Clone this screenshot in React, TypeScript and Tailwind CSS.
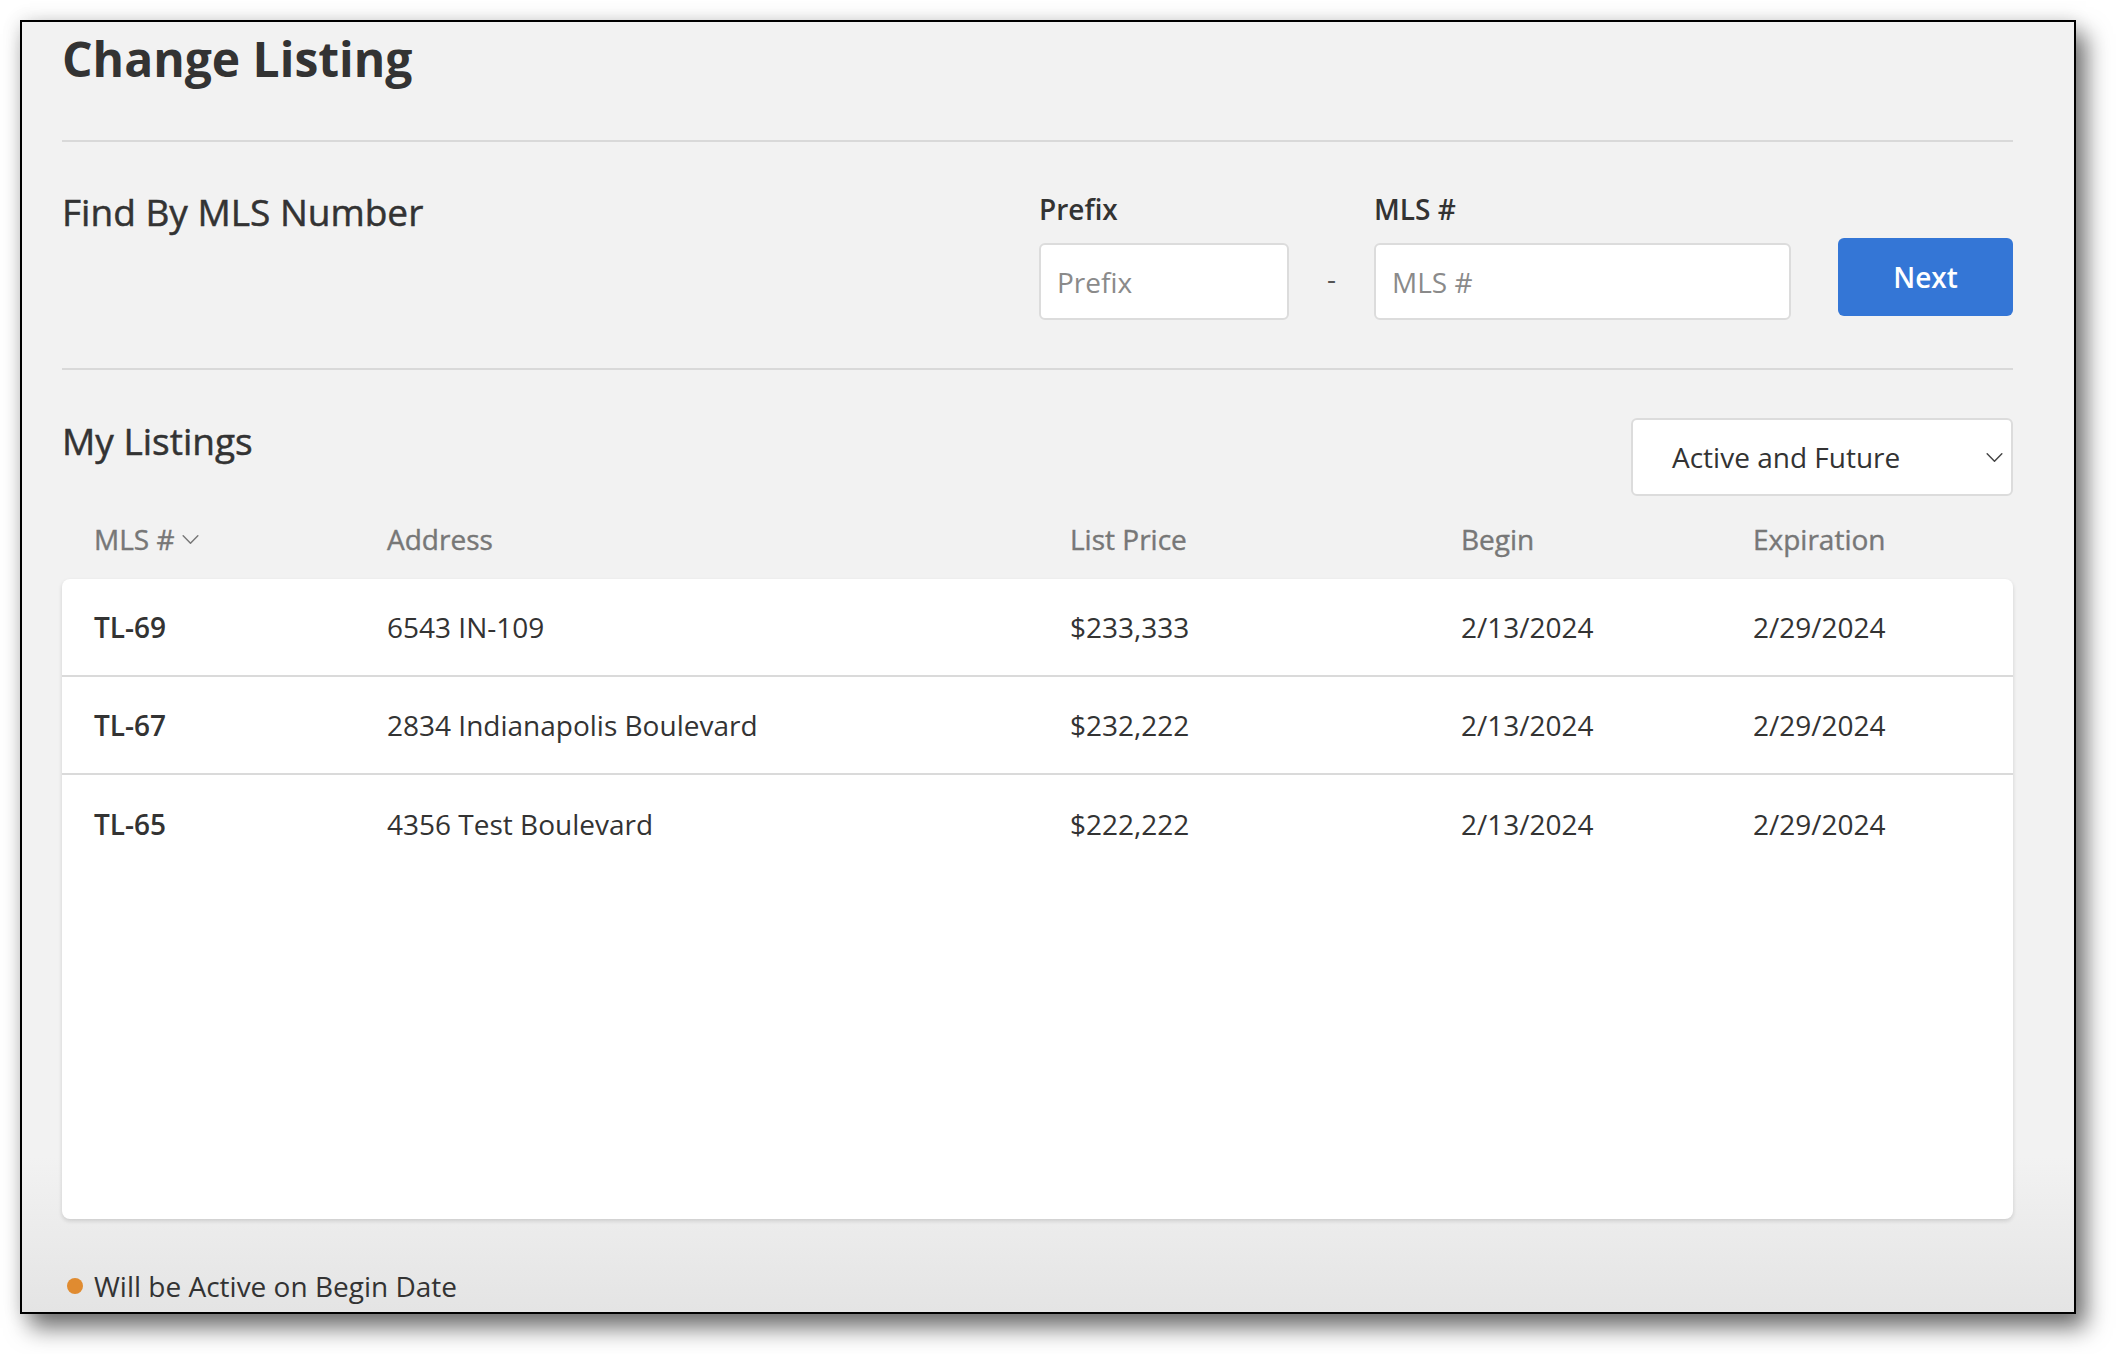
import React from 'react';

const listings = [
  { mls: 'TL-69', address: '6543 IN-109', price: '$233,333', begin: '2/13/2024', exp: '2/29/2024' },
  { mls: 'TL-67', address: '2834 Indianapolis Boulevard', price: '$232,222', begin: '2/13/2024', exp: '2/29/2024' },
  { mls: 'TL-65', address: '4356 Test Boulevard', price: '$222,222', begin: '2/13/2024', exp: '2/29/2024' },
];

const Chevron = ({ className }: { className?: string }) => (
  <svg viewBox="0 0 20 12" fill="none" stroke="currentColor" strokeWidth="1.6" className={className}>
    <polyline points="2,2 10,10 18,2" strokeLinecap="round" strokeLinejoin="round" />
  </svg>
);

const App = () => {
  return (
    <div className="min-h-[1354px] w-full bg-white pt-[20px] pl-[20px] font-['Open_Sans',sans-serif] text-[#333]">
      {/* Window frame */}
      <div className="flex h-[1294px] w-[2056px] flex-col border-2 border-black bg-[linear-gradient(to_bottom,#f2f2f2_88%,#e4e4e4)] pl-[40px] pr-[61px] shadow-[10px_14px_22px_rgba(0,0,0,0.55),0_0_18px_rgba(0,0,0,0.12)]">
        {/* Title */}
        <h1 className="mt-[7px] text-[48px] font-bold leading-[60px] text-[#333]">Change Listing</h1>
        <div className="mt-[51px] h-[2px] bg-[#d9d9d9]" />

        {/* Find by MLS */}
        <div className="flex items-start justify-between pt-[48px]">
          <h2 className="text-[37px] font-medium leading-[44px] [-webkit-text-stroke:0.5px_currentColor]">Find By MLS Number</h2>
          <div className="flex items-end">
            <div className="flex flex-col">
              <label className="text-[28px] font-semibold leading-[38px]">Prefix</label>
              <div className="mt-[15px] flex h-[77px] w-[250px] items-center rounded-[6px] border-2 border-[#dcdcdc] bg-white pl-[16px] text-[28px] text-[#8a8a8a]">
                Prefix
              </div>
            </div>
            <div className="flex h-[77px] w-[85px] items-center justify-center pb-[8px] text-[28px] text-[#555]">-</div>
            <div className="flex flex-col">
              <label className="text-[28px] font-semibold leading-[38px]">MLS #</label>
              <div className="mt-[15px] flex h-[77px] w-[417px] items-center rounded-[6px] border-2 border-[#dcdcdc] bg-white pl-[16px] text-[28px] text-[#8a8a8a]">
                MLS #
              </div>
            </div>
            <button className="mb-[4px] ml-[47px] flex h-[78px] w-[175px] items-center justify-center rounded-[6px] bg-[#3476d6] text-[28px] font-semibold text-white">
              Next
            </button>
          </div>
        </div>
        <div className="mt-[48px] h-[2px] bg-[#d9d9d9]" />

        {/* My listings */}
        <div className="flex items-start justify-between pt-[48px]">
          <h2 className="text-[37px] font-medium leading-[46px] [-webkit-text-stroke:0.5px_currentColor]">My Listings</h2>
          <div className="flex h-[78px] w-[382px] items-center justify-between rounded-[6px] border-2 border-[#dcdcdc] bg-white pl-[39px] pr-[7px] text-[28px] text-[#333]">
            <span>Active and Future</span>
            <Chevron className="h-[11px] w-[19px] text-[#444]" />
          </div>
        </div>

        <div className="mt-[24px] grid grid-cols-[293px_683px_391px_292px_1fr] pl-[32px] text-[28px] font-medium leading-[38px] text-[#777] [-webkit-text-stroke:0.4px_currentColor]">
          <div className="flex items-center gap-[6px]">
            MLS #
            <Chevron className="h-[11px] w-[19px] text-[#777]" />
          </div>
          <div>Address</div>
          <div>List Price</div>
          <div>Begin</div>
          <div>Expiration</div>
        </div>

        <div className="mt-[21px] h-[640px] rounded-[8px] bg-white shadow-[0_2px_4px_rgba(0,0,0,0.14)]">
          {listings.map((l, i) => (
            <div
              key={l.mls}
              className={
                i < listings.length - 1
                  ? 'grid h-[98px] grid-cols-[293px_683px_391px_292px_1fr] items-center border-b-2 border-[#dadada] pl-[32px] text-[28px] text-[#333]'
                  : 'grid h-[98px] grid-cols-[293px_683px_391px_292px_1fr] items-center pl-[32px] text-[28px] text-[#333]'
              }
            >
              <div className="font-semibold">{l.mls}</div>
              <div>{l.address}</div>
              <div>{l.price}</div>
              <div>{l.begin}</div>
              <div>{l.exp}</div>
            </div>
          ))}
        </div>

        <div className="mt-[48px] flex items-center gap-[11px] pl-[5px] text-[28px] leading-[38px] text-[#333]">
          <span className="h-[16px] w-[16px] rounded-full bg-[#e08b30]" />
          <span>Will be Active on Begin Date</span>
        </div>
      </div>
    </div>
  );
};

export default App;
